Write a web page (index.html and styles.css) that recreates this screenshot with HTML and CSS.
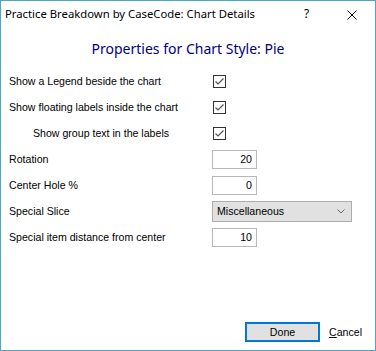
FILE: index.html
```html
<!DOCTYPE html>
<html lang="en">
<head>
    <meta charset="UTF-8">
    <title>Chart Details</title>
    <link rel="stylesheet" href="styles.css">
</head>

<body>
    <div class="window">
        <div class="titlebar">
            <span class="title">Practice Breakdown by CaseCode: Chart Details</span>
            <span class="help">?</span>
            <span class="close">
                <svg width="10" height="10" viewBox="0 0 10 10"><path d="M0.5 0.5 L9.5 9.5 M9.5 0.5 L0.5 9.5" stroke="#000" stroke-width="1" fill="none"/></svg>
            </span>
        </div>

        <h2 class="heading">Properties for Chart Style: Pie</h2>

        <div class="form">
            <div class="row">
                <label>Show a Legend beside the chart</label>
                <span class="check"><svg width="11" height="11" viewBox="0 0 11 11"><path d="M1.5 5.5 L4 8 L9.5 2.5" stroke="#555" stroke-width="1.2" fill="none"/></svg></span>
            </div>
            <div class="row">
                <label>Show floating labels inside the chart</label>
                <span class="check"><svg width="11" height="11" viewBox="0 0 11 11"><path d="M1.5 5.5 L4 8 L9.5 2.5" stroke="#555" stroke-width="1.2" fill="none"/></svg></span>
            </div>
            <div class="row">
                <label class="indent">Show group text in the labels</label>
                <span class="check"><svg width="11" height="11" viewBox="0 0 11 11"><path d="M1.5 5.5 L4 8 L9.5 2.5" stroke="#555" stroke-width="1.2" fill="none"/></svg></span>
            </div>
            <div class="row">
                <label>Rotation</label>
                <span class="field">20</span>
            </div>
            <div class="row">
                <label>Center Hole %</label>
                <span class="field">0</span>
            </div>
            <div class="row">
                <label>Special Slice</label>
                <span class="combo">
                    <span>Miscellaneous</span>
                    <svg width="8" height="5" viewBox="0 0 8 5"><path d="M0.5 0.5 L4 4 L7.5 0.5" stroke="#666" stroke-width="1" fill="none"/></svg>
                </span>
            </div>
            <div class="row">
                <label>Special item distance from center</label>
                <span class="field">10</span>
            </div>
        </div>

        <div class="footer">
            <span class="btn">Done</span>
            <span class="link"><u>C</u>ancel</span>
        </div>
    </div>
</body>

</html>
```

FILE: styles.css
```css
html, body {
    margin: 0;
    padding: 0;
    background: #fff;
}

.window {
    box-sizing: border-box;
    width: 376px;
    height: 351px;
    border: 1px solid #4fa6c2;
    display: flex;
    flex-direction: column;
    font-family: "Liberation Sans", Arial, sans-serif;
    font-size: 10.6px;
    color: #000;
}

.titlebar {
    height: 29px;
    display: flex;
    align-items: center;
    padding-left: 4px;
}

.titlebar .title {
    flex: 1;
    font-family: "Noto Sans", sans-serif;
    font-size: 11.3px;
    margin-top: -4px;
}

.titlebar .help {
    font-family: "Noto Sans", sans-serif;
    font-size: 12px;
    width: 43px;
    margin-top: -4px;
}

.titlebar .close {
    width: 28px;
    display: flex;
    margin-top: -2px;
}

.heading {
    margin: 9px 0 0 0;
    text-align: center;
    font-family: "Noto Sans", sans-serif;
    font-weight: normal;
    font-size: 14px;
    color: #000080;
}

.form {
    margin-top: 10px;
    display: flex;
    flex-direction: column;
}

.row {
    height: 26px;
    display: flex;
    align-items: center;
}

.row label {
    width: 203px;
    padding-left: 8px;
}

.row label.indent {
    width: 179px;
    padding-left: 32px;
}

.check {
    box-sizing: border-box;
    width: 13px;
    height: 13px;
    border: 1px solid #333;
    display: flex;
    align-items: center;
    justify-content: center;
    margin-left: 1px;
}

.field {
    box-sizing: border-box;
    width: 45px;
    height: 19px;
    border: 1px solid #b8b8b8;
    text-align: right;
    padding-right: 4px;
    line-height: 17px;
}

.combo {
    box-sizing: border-box;
    width: 140px;
    height: 21px;
    border: 1px solid #adadad;
    background: #e1e1e1;
    display: flex;
    align-items: center;
    justify-content: space-between;
    padding: 0 6px 0 4px;
}

.footer {
    margin-top: auto;
    display: flex;
    align-items: center;
    justify-content: flex-end;
    padding: 0 13px 8px 0;
}

.btn {
    box-sizing: border-box;
    width: 75px;
    height: 20px;
    border: 2px solid #0078d7;
    background: #e1e1e1;
    display: flex;
    align-items: center;
    justify-content: center;
}

.link {
    margin-left: 9px;
}
```
